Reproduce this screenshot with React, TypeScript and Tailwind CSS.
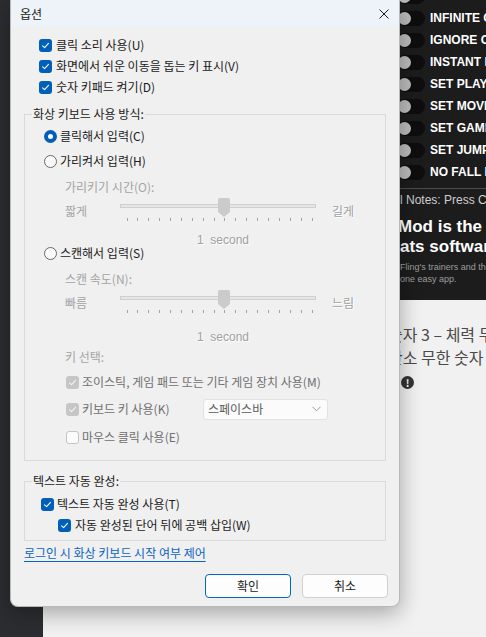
import React from "react";

const toggles = [
  "INFINITE HEALTH",
  "INFINITE CHARGES",
  "IGNORE COOLDOWN",
  "INSTANT KILL",
  "SET PLAYER SPEED",
  "SET MOVEMENT SPEED",
  "SET GAME SPEED",
  "SET JUMP HEIGHT",
  "NO FALL DAMAGE",
];

function CheckMark({ color }: { color: string }) {
  return (
    <svg width="9" height="9" viewBox="0 0 10 10">
      <path d="M1.8 5.3 L4 7.4 L8.3 2.7" fill="none" stroke={color} strokeWidth="1.2" strokeLinecap="round" strokeLinejoin="round" />
    </svg>
  );
}

function Box({ kind }: { kind: "on" | "dis-on" | "dis-off" }) {
  if (kind === "on")
    return (
      <span className="flex h-[13px] w-[13px] shrink-0 items-center justify-center rounded-[3px] bg-[#005fb8]">
        <CheckMark color="#ffffff" />
      </span>
    );
  if (kind === "dis-on")
    return (
      <span className="flex h-[13px] w-[13px] shrink-0 items-center justify-center rounded-[3px] bg-[#c6c6c6]">
        <CheckMark color="#f4f4f4" />
      </span>
    );
  return <span className="h-[13px] w-[13px] shrink-0 rounded-[3px] border border-[#c4c4c4] bg-[#fbfbfb]" />;
}

function Radio({ on }: { on?: boolean }) {
  if (on)
    return (
      <span className="flex h-[13px] w-[13px] shrink-0 items-center justify-center rounded-full bg-[#005fb8]">
        <span className="h-[5px] w-[5px] rounded-full bg-white" />
      </span>
    );
  return <span className="h-[13px] w-[13px] shrink-0 rounded-full border border-[#6a6a6a] bg-[#fafafa]" />;
}

function Slider() {
  const ticks = Array.from({ length: 18 }, (_, i) => 9.5 + i * (185 / 17));
  return (
    <svg width="204" height="26" viewBox="0 0 204 26" className="shrink-0">
      <rect x="3.5" y="6.5" width="195" height="3" fill="#e6e6e6" stroke="#d0d0d0" />
      {ticks.map((x, i) => (
        <line key={i} x1={Math.round(x) + 0.5} x2={Math.round(x) + 0.5} y1="20" y2="23" stroke="#a3a3a3" />
      ))}
      <path d="M101 1.5 Q101 0 102.5 0 H111.5 Q113 0 113 1.5 V14 L107 19 L101 14 Z" fill="#cbcbcb" />
    </svg>
  );
}

export default function App() {
  return (
    <div className="relative h-[637px] w-[486px] overflow-hidden bg-[#f1f1f1] font-['Malgun_Gothic','Noto_Sans_CJK_KR',sans-serif]">
      {/* page behind the dialog */}
      <div className="flex h-full">
        <div className="w-[43px] shrink-0 bg-[#2b2d30]" />
        <div className="flex min-w-0 flex-1 flex-col">
          <div className="h-[300px] shrink-0 overflow-hidden bg-[#1c1c1d] font-['Liberation_Sans',sans-serif]">
            <div className="-mt-[15px] pl-[354px]">
              {toggles.map((t) => (
                <div key={t} className="flex h-[22px] items-center whitespace-nowrap">
                  <span className="flex h-[15px] w-[28px] shrink-0 items-center rounded-full bg-[#0e0e0e] pl-[1px]">
                    <span className="h-[13px] w-[13px] rounded-full bg-[#bcbcbc]" />
                  </span>
                  <span className="ml-[5px] text-[12px] font-bold text-white">{t}</span>
                </div>
              ))}
            </div>
            <div className="ml-[357px] mt-[5px] h-px bg-[#4c4c4c]" />
            <div className="mt-[3px] flex h-[16px] items-center whitespace-nowrap pl-[357px] text-[12px] text-[#cfcfcf]">
              l Notes: Press Ctrl+F1 at main screen
            </div>
            <div className="mt-[9px] whitespace-nowrap pl-[355px] text-[17px] font-bold leading-[20px] text-white">
              <div>Mod is the best</div>
              <div className="pl-[2px]">ats software</div>
            </div>
            <div className="mt-[4px] whitespace-nowrap pl-[357px] text-[9px] leading-[12px] text-[#9c9c9c]">
              <div>Fling's trainers and thousands of</div>
              <div>one easy app.</div>
            </div>
          </div>
          <div className="flex-1 bg-[#f1f1f1] pl-[345px] pt-[23px] text-[16px] leading-[23px] text-[#4a4a4a]">
            <div className="whitespace-nowrap">숫자 3 – 체력 무한</div>
            <div className="whitespace-nowrap">산소 무한 숫자 4</div>
            <div className="ml-[13px] mt-[7px] flex h-[13px] w-[13px] items-center justify-center rounded-full bg-[#333] text-[10px] font-bold leading-none text-white">
              !
            </div>
          </div>
        </div>
      </div>

      {/* dialog window */}
      <div className="absolute left-[10px] top-0 flex h-[607px] w-[390px] flex-col overflow-hidden rounded-b-[8px] border-x border-b border-[#b9b9b9] bg-[#f0f0f0] text-[12px] leading-[16px] text-[#1a1a1a] shadow-[0_6px_22px_rgba(0,0,0,0.32)]">
        <div className="flex h-[27px] shrink-0 items-center justify-between bg-[#eef3f9] pl-[9px] pr-[10px]">
          <span className="text-[12px]">옵션</span>
          <svg width="10" height="10" viewBox="0 0 10 10">
            <path d="M0.5 0.5 L9.5 9.5 M9.5 0.5 L0.5 9.5" stroke="#1a1a1a" strokeWidth="1" />
          </svg>
        </div>

        <div className="flex flex-col px-[13px] pt-[10px]">
          <div className="ml-[15px] flex h-[16px] items-center gap-[4px]">
            <Box kind="on" />
            <span>클릭 소리 사용(U)</span>
          </div>
          <div className="ml-[15px] mt-[5px] flex h-[16px] items-center gap-[4px]">
            <Box kind="on" />
            <span>화면에서 쉬운 이동을 돕는 키 표시(V)</span>
          </div>
          <div className="ml-[15px] mt-[5px] flex h-[16px] items-center gap-[4px]">
            <Box kind="on" />
            <span>숫자 키패드 켜기(D)</span>
          </div>

          <fieldset className="mt-[11px] w-[362px] border border-[#dadada] pb-[15px] pt-[6px]">
            <legend className="ml-[7px] px-[1px] leading-[16px]">화상 키보드 사용 방식:</legend>
            <div className="ml-[19px] flex h-[16px] items-center gap-[3px]">
              <Radio on />
              <span>클릭해서 입력(C)</span>
            </div>
            <div className="ml-[19px] mt-[9px] flex h-[16px] items-center gap-[3px]">
              <Radio />
              <span>가리켜서 입력(H)</span>
            </div>
            <div className="ml-[40px] mt-[10px] flex h-[16px] items-center text-[#a4a4a4]">가리키기 시간(O):</div>
            <div className="ml-[40px] mt-[8px] flex h-[16px] items-center">
              <span className="w-[52px] text-[#a4a4a4]">짧게</span>
              <Slider />
              <span className="ml-[11px] text-[#a0a0a0] [text-shadow:1px_1px_0_#ffffff]">길게</span>
            </div>
            <div className="ml-[172px] mt-[13px] flex h-[16px] items-center font-['Liberation_Sans',sans-serif] text-[#a0a0a0] [text-shadow:1px_1px_0_#ffffff]">
              1&nbsp;&nbsp;second
            </div>
            <div className="ml-[19px] -mt-[3px] flex h-[16px] items-center gap-[3px]">
              <Radio />
              <span>스캔해서 입력(S)</span>
            </div>
            <div className="ml-[40px] mt-[10px] flex h-[16px] items-center text-[#a4a4a4]">스캔 속도(N):</div>
            <div className="ml-[40px] mt-[8px] flex h-[16px] items-center">
              <span className="w-[52px] text-[#a4a4a4]">빠름</span>
              <Slider />
              <span className="ml-[11px] text-[#a0a0a0] [text-shadow:1px_1px_0_#ffffff]">느림</span>
            </div>
            <div className="ml-[172px] mt-[18px] flex h-[16px] items-center font-['Liberation_Sans',sans-serif] text-[#a0a0a0] [text-shadow:1px_1px_0_#ffffff]">
              1&nbsp;&nbsp;second
            </div>
            <div className="ml-[40px] mt-[4px] flex h-[16px] items-center text-[#a4a4a4]">키 선택:</div>
            <div className="ml-[41px] mt-[9px] flex h-[16px] items-center gap-[3px] text-[#6f6f6f]">
              <Box kind="dis-on" />
              <span className="whitespace-nowrap">조이스틱, 게임 패드 또는 기타 게임 장치 사용(M)</span>
            </div>
            <div className="ml-[41px] mt-[11px] flex h-[16px] items-center gap-[3px] text-[#6f6f6f]">
              <Box kind="dis-on" />
              <span className="w-[118px]">키보드 키 사용(K)</span>
              <div className="flex h-[21px] w-[125px] shrink-0 items-center justify-between rounded-[3px] border border-[#e2e2e2] bg-[#fbfbfb] pl-[4px] pr-[6px] text-[#5a5a5a]">
                <span>스페이스바</span>
                <svg width="9" height="6" viewBox="0 0 9 6">
                  <path d="M0.5 0.8 L4.5 4.8 L8.5 0.8" fill="none" stroke="#9a9a9a" strokeWidth="1" />
                </svg>
              </div>
            </div>
            <div className="ml-[41px] mt-[12px] flex h-[16px] items-center gap-[3px] text-[#6f6f6f]">
              <Box kind="dis-off" />
              <span>마우스 클릭 사용(E)</span>
            </div>
          </fieldset>

          <fieldset className="mt-[12px] w-[362px] border border-[#dadada] pb-[7px] pt-[7px]">
            <legend className="ml-[7px] px-[1px] leading-[16px]">텍스트 자동 완성:</legend>
            <div className="ml-[16px] flex h-[16px] items-center gap-[3px]">
              <Box kind="on" />
              <span>텍스트 자동 완성 사용(T)</span>
            </div>
            <div className="ml-[33px] mt-[5px] flex h-[16px] items-center gap-[4px]">
              <Box kind="on" />
              <span>자동 완성된 단어 뒤에 공백 삽입(W)</span>
            </div>
          </fieldset>

          <div className="mt-[4px] flex h-[16px] items-center">
            <span className="text-[#0a63c4] underline underline-offset-[3px]">로그인 시 화상 키보드 시작 여부 제어</span>
          </div>

          <div className="-mr-[2px] mt-[13px] flex justify-end gap-[11px]">
            <button className="h-[24px] w-[86px] rounded-[4px] border-[1.5px] border-[#0067c0] bg-[#fdfdfd] text-[12px] text-[#1a1a1a]">
              확인
            </button>
            <button className="h-[24px] w-[86px] rounded-[4px] border border-[#d0d0d0] bg-[#fdfdfd] text-[12px] text-[#1a1a1a]">
              취소
            </button>
          </div>
        </div>
      </div>
    </div>
  );
}
